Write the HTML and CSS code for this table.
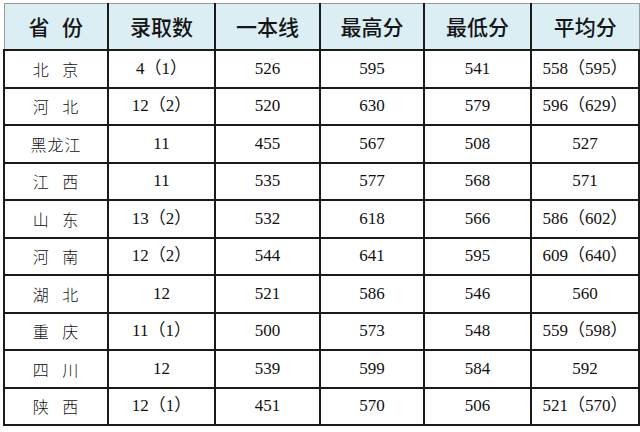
FILE: index.html
```html
<!DOCTYPE html>
<html lang="zh">
<head>
<meta charset="utf-8">
<link rel="stylesheet" href="styles.css">
</head>
<body>
<div class="wrap">
<table class="scores">
<colgroup>
<col class="c1"><col class="c2"><col class="c3"><col class="c4"><col class="c5"><col class="c6">
</colgroup>
<thead>
<tr><th class="first">省 份</th><th>录取数</th><th>一本线</th><th>最高分</th><th>最低分</th><th class="last">平均分</th></tr>
</thead>
<tbody>
<tr><td class="prov">北 京</td><td>4（1）</td><td>526</td><td>595</td><td>541</td><td>558（595）</td></tr>
<tr><td class="prov">河 北</td><td>12（2）</td><td>520</td><td>630</td><td>579</td><td>596（629）</td></tr>
<tr><td class="prov">黑龙江</td><td>11</td><td>455</td><td>567</td><td>508</td><td>527</td></tr>
<tr><td class="prov">江 西</td><td>11</td><td>535</td><td>577</td><td>568</td><td>571</td></tr>
<tr><td class="prov">山 东</td><td>13（2）</td><td>532</td><td>618</td><td>566</td><td>586（602）</td></tr>
<tr><td class="prov">河 南</td><td>12（2）</td><td>544</td><td>641</td><td>595</td><td>609（640）</td></tr>
<tr><td class="prov">湖 北</td><td>12</td><td>521</td><td>586</td><td>546</td><td>560</td></tr>
<tr><td class="prov">重 庆</td><td>11（1）</td><td>500</td><td>573</td><td>548</td><td>559（598）</td></tr>
<tr><td class="prov">四 川</td><td>12</td><td>539</td><td>599</td><td>584</td><td>592</td></tr>
<tr><td class="prov">陕 西</td><td>12（1）</td><td>451</td><td>570</td><td>506</td><td>521（570）</td></tr>
</tbody>
</table>
</div>
</body>
</html>
```

FILE: styles.css
```css
html, body {
  margin: 0;
  padding: 0;
  background: #ffffff;
}
.wrap {
  padding: 3px 0 0 3px;
}
.scores {
  border-collapse: collapse;
  table-layout: fixed;
  width: 635px;
  font-family: "Liberation Serif", "Noto Sans CJK SC", serif;
  color: #111;
}
.c1 { width: 104px; }
.c2 { width: 107px; }
.c3 { width: 105px; }
.c4 { width: 104px; }
.c5 { width: 107px; }
.c6 { width: 108px; }
.scores th {
  height: 43px;
  padding: 0 0 2px 0;
  background: #daeef4;
  font-family: "Noto Sans CJK SC", sans-serif;
  font-weight: 500;
  font-size: 21px;
  color: #151515;
  border-top: 1px solid #9a9a9a;
  border-left: 2px solid #1a1a1a;
  border-right: 2px solid #1a1a1a;
  border-bottom: 2px solid #1a1a1a;
  text-align: center;
  vertical-align: middle;
}
.scores th.first {
  border-left: 1px solid #9a9a9a;
  word-spacing: 8px;
}
.scores th.last { border-right: 1px solid #9a9a9a; }
.scores td {
  height: 35.5px;
  padding: 0;
  border: 2px solid #1a1a1a;
  text-align: center;
  vertical-align: middle;
  font-size: 17px;
  line-height: 20px;
}
.scores td.prov {
  font-family: "Noto Sans CJK SC", sans-serif;
  font-weight: 300;
  font-size: 16px;
  letter-spacing: 1px;
  word-spacing: 8px;
}
```
